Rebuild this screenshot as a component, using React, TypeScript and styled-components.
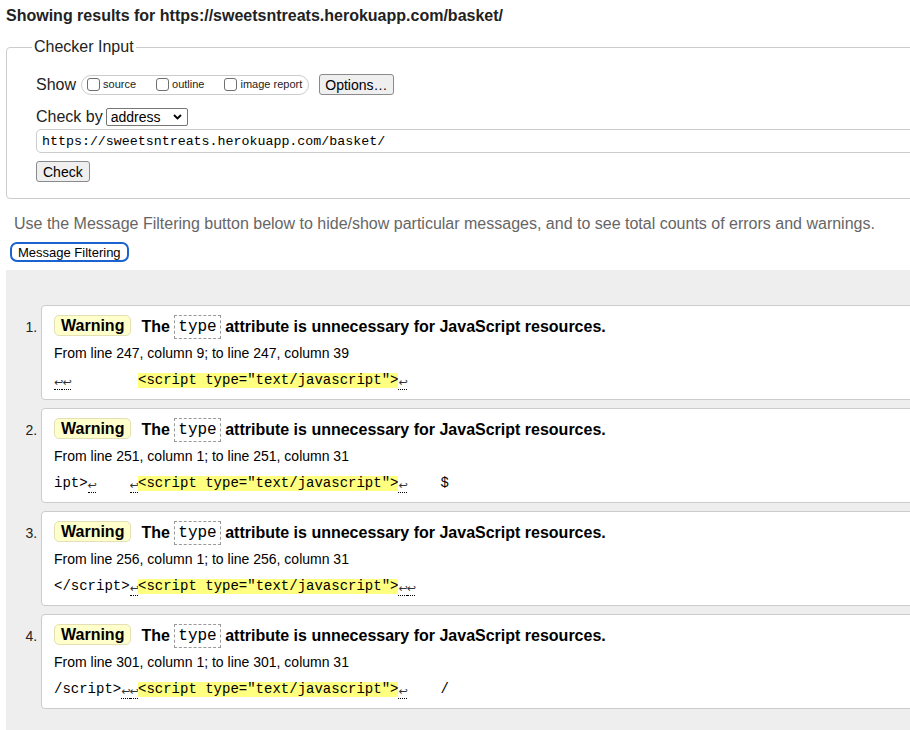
import React from 'react';
import styled, { createGlobalStyle } from 'styled-components';

const GlobalStyle = createGlobalStyle`
  html, body {
    margin: 0;
    padding: 0;
    overflow: hidden;
    background: #fff;
  }
  body {
    font-family: "Liberation Sans", Arial, Helvetica, sans-serif;
    color: #000;
  }
`;

const Page = styled.div`
  width: 1000px;
  padding-left: 6px;
`;

const Heading = styled.h2`
  margin: 7px 0 0;
  font-size: 16px;
  line-height: 18px;
  font-weight: bold;
  color: #222;
`;

const Fieldset = styled.fieldset`
  margin: 13px 0 0;
  padding: 18px 0 16px 29px;
  border: 1px solid #ccc;
  border-radius: 4px;
  min-width: 0;
`;

const Legend = styled.legend`
  margin-left: -4px;
  padding: 0 2px;
  font-size: 16px;
  line-height: 18px;
  color: #222;
`;

const Row = styled.div<{ $top?: number; $height: number }>`
  display: flex;
  align-items: center;
  margin-top: ${({ $top }) => $top || 0}px;
  height: ${({ $height }) => $height}px;
`;

const RowLabel = styled.span<{ $gap?: number }>`
  font-size: 16px;
  margin-right: ${({ $gap }) => $gap ?? 5}px;
  color: #222;
`;

const Pill = styled.div`
  display: inline-flex;
  align-items: center;
  box-sizing: border-box;
  height: 20px;
  padding: 0 6px 0 5px;
  border: 1px solid #ccc;
  border-radius: 10px;
`;

const CheckLabel = styled.label`
  display: inline-flex;
  align-items: flex-end;
  font-size: 11px;
  line-height: 13px;
  margin-right: 20px;
  color: #222;

  &:last-child {
    margin-right: 0;
  }
`;

const Box = styled.input`
  appearance: none;
  box-sizing: border-box;
  width: 13px;
  height: 13px;
  margin: 0 3px 0 0;
  border: 1px solid #707070;
  border-radius: 3px;
  background: #fff;
`;

const Button = styled.button<{ $size?: number }>`
  box-sizing: border-box;
  height: 21px;
  padding: 0 6px;
  font-family: "Liberation Sans", Arial, sans-serif;
  font-size: ${({ $size }) => $size || 14}px;
  color: #000;
  background: #efefef;
  border: 1px solid #8a8a8a;
  border-radius: 3px;
`;

const OptionsButton = styled(Button)`
  margin-left: 10px;
  padding: 0 5px;
`;

const SelectWrap = styled.div`
  position: relative;
  display: inline-block;
  height: 18px;
`;

const Select = styled.select`
  appearance: none;
  box-sizing: border-box;
  width: 82px;
  height: 18px;
  padding: 0 0 0 4px;
  font-family: "Liberation Sans", Arial, sans-serif;
  font-size: 14px;
  line-height: 16px;
  color: #000;
  background: #fff;
  border: 1px solid #767676;
  border-radius: 2px;
`;

const Chevron = styled.svg`
  position: absolute;
  right: 6px;
  top: 6px;
  pointer-events: none;
`;

const UrlInput = styled.input`
  display: block;
  box-sizing: border-box;
  width: 100%;
  height: 24px;
  margin-top: 2px;
  padding: 0 5px;
  font-family: "Liberation Mono", "DejaVu Sans Mono", monospace;
  font-size: 13.3px;
  color: #000;
  border: 1px solid #ccc;
  border-radius: 5px;
`;

const CheckButton = styled(Button)`
  display: block;
  margin-top: 8px;
`;

const Intro = styled.p`
  margin: 16px 0 0 8px;
  font-size: 16px;
  line-height: 18px;
  color: #666;
`;

const FilterButton = styled.button`
  display: block;
  box-sizing: border-box;
  height: 20px;
  margin: 9px 0 0 4px;
  padding: 0 6px;
  font-family: "Liberation Sans", Arial, sans-serif;
  font-size: 13px;
  color: #000;
  background: #fff;
  border: 2px solid #1a62d0;
  border-radius: 7px;
`;

const Panel = styled.div`
  margin-top: 8px;
  padding: 35px 0 30px 35px;
  background: #eee;
`;

const List = styled.ol`
  margin: 0;
  padding: 0;
  list-style: decimal outside;
`;

const Card = styled.li`
  margin-bottom: 8px;
  padding: 9px 12px 9px;
  font-size: 14px;
  color: #222;
  background: #fff;
  border: 1px solid #ccc;
  border-radius: 4px;

  &::marker {
    color: #222;
  }
`;

const Title = styled.p`
  margin: 0;
  height: 24px;
  font-size: 16px;
  line-height: 24px;
  font-weight: bold;
  color: #000;
`;

const Badge = styled.span`
  display: inline-block;
  box-sizing: border-box;
  height: 21px;
  margin-right: 10px;
  padding: 0 6px;
  line-height: 19px;
  vertical-align: 1px;
  background: #ffffcc;
  border: 1px solid #e4e0b4;
  border-radius: 5px;
`;

const Code = styled.code`
  display: inline-block;
  box-sizing: border-box;
  height: 24px;
  padding: 0 3px;
  font-family: "Liberation Mono", "DejaVu Sans Mono", monospace;
  font-size: 16px;
  font-weight: normal;
  line-height: 22px;
  vertical-align: top;
  border: 1px dashed #999;
`;

const Location = styled.p`
  margin: 6px 0 0;
  font-size: 14px;
  line-height: 17px;
  color: #000;
`;

const Extract = styled.p`
  margin: 9px 0 0;
  height: 19px;
  font-family: "Liberation Mono", "DejaVu Sans Mono", monospace;
  font-size: 14px;
  line-height: 19px;
  white-space: pre;
  color: #000;
`;

const Mark = styled.mark`
  display: inline-block;
  line-height: 15px;
  color: #000;
  background: #ffff80;
`;

const Lf = styled.span`
  display: inline-block;
  width: 8.4px;
  height: 14px;
  font-family: "DejaVu Sans", sans-serif;
  font-size: 11px;
  line-height: 15px;
  text-align: center;
  color: #333;
  vertical-align: -2px;
  border-bottom: 1px dotted #000;
`;

interface Message {
  from: string;
  before: React.ReactNode;
  after: React.ReactNode;
}

const lf = (n: number) => Array.from({ length: n }, (_, i) => <Lf key={i}>↩</Lf>);

const messages: Message[] = [
  {
    from: 'From line 247, column 9; to line 247, column 39',
    before: <>{lf(2)}{'        '}</>,
    after: <>{lf(1)}</>,
  },
  {
    from: 'From line 251, column 1; to line 251, column 31',
    before: <>ipt&gt;{lf(1)}{'    '}{lf(1)}</>,
    after: <>{lf(1)}{'    $'}</>,
  },
  {
    from: 'From line 256, column 1; to line 256, column 31',
    before: <>&lt;/script&gt;{lf(1)}</>,
    after: <>{lf(2)}</>,
  },
  {
    from: 'From line 301, column 1; to line 301, column 31',
    before: <>/script&gt;{lf(2)}</>,
    after: <>{lf(1)}{'    /'}</>,
  },
];

const App: React.FC = () => (
  <Page>
    <GlobalStyle />
    <Heading>Showing results for https://sweetsntreats.herokuapp.com/basket/</Heading>
    <Fieldset>
      <Legend>Checker Input</Legend>
      <Row $height={21}>
        <RowLabel>Show</RowLabel>
        <Pill>
          <CheckLabel><Box type="checkbox" />source</CheckLabel>
          <CheckLabel><Box type="checkbox" />outline</CheckLabel>
          <CheckLabel><Box type="checkbox" />image report</CheckLabel>
        </Pill>
        <OptionsButton>Options…</OptionsButton>
      </Row>
      <Row $top={12} $height={20}>
        <RowLabel $gap={3}>Check by</RowLabel>
        <SelectWrap>
          <Select defaultValue="address">
            <option value="address">address</option>
            <option value="upload">file upload</option>
            <option value="text">text input</option>
          </Select>
          <Chevron width="9" height="6" viewBox="0 0 9 6">
            <polyline points="1,1 4.5,4.5 8,1" fill="none" stroke="#000" strokeWidth="1.8" />
          </Chevron>
        </SelectWrap>
      </Row>
      <UrlInput defaultValue="https://sweetsntreats.herokuapp.com/basket/" />
      <CheckButton>Check</CheckButton>
    </Fieldset>
    <Intro>
      Use the Message Filtering button below to hide/show particular messages, and to see total counts of errors and warnings.
    </Intro>
    <FilterButton>Message Filtering</FilterButton>
    <Panel>
      <List>
        {messages.map((m, i) => (
          <Card key={i}>
            <Title>
              <Badge>Warning</Badge>The <Code>type</Code> attribute is unnecessary for JavaScript resources.
            </Title>
            <Location>{m.from}</Location>
            <Extract>
              {m.before}
              <Mark>&lt;script type="text/javascript"&gt;</Mark>
              {m.after}
            </Extract>
          </Card>
        ))}
      </List>
    </Panel>
  </Page>
);

export default App;
